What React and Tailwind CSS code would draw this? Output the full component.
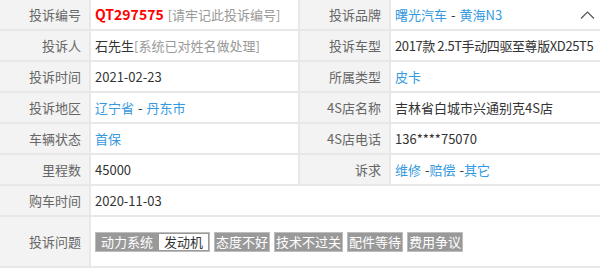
import React from "react";

const label = "flex items-center justify-end bg-[#f3f3f3] pr-[8px] text-[#666] whitespace-nowrap";
const value = "flex items-center bg-white pl-[4px] text-[#333] whitespace-nowrap overflow-hidden";
const link = "text-[#3399e0]";

function Chevron() {
  return (
    <svg width="15" height="10" viewBox="0 0 15 10" fill="none" className="ml-auto mr-[5px]">
      <path d="M1 8.5L7.5 2L14 8.5" stroke="#555" strokeWidth="1.2" />
    </svg>
  );
}

export default function App() {
  const tags = ["态度不好", "技术不过关", "配件等待", "费用争议"];

  return (
    <div className="w-[600px] h-[268px] bg-white font-['Noto_Sans_CJK_SC',sans-serif] text-[13px]">
      <div className="grid grid-cols-[89px_207px_89px_1fr] grid-rows-[repeat(7,29px)_49px] gap-[2px] bg-[#e8e8e8] pb-[2px]">
        <div className={label}>投诉编号</div>
        <div className={value}>
          <span className="text-[14px] font-bold text-[#ff0000]">QT297575</span>
          <span className="ml-[4px] text-[#999]">[请牢记此投诉编号]</span>
        </div>
        <div className={label}>投诉品牌</div>
        <div className={value}>
          <span className={link}>曙光汽车</span>
          <span className="mx-[4px]">-</span>
          <span className={link}>黄海N3</span>
          <Chevron />
        </div>

        <div className={label}>投诉人</div>
        <div className={value}>
          石先生<span className="text-[#999]">[系统已对姓名做处理]</span>
        </div>
        <div className={label}>投诉车型</div>
        <div className={`${value} tracking-[-0.4px]`}>2017款 2.5T手动四驱至尊版XD25T5</div>

        <div className={label}>投诉时间</div>
        <div className={value}>2021-02-23</div>
        <div className={label}>所属类型</div>
        <div className={value}>
          <span className={link}>皮卡</span>
        </div>

        <div className={label}>投诉地区</div>
        <div className={value}>
          <span className={link}>辽宁省</span>
          <span className="mx-[4px]">-</span>
          <span className={link}>丹东市</span>
        </div>
        <div className={label}>4S店名称</div>
        <div className={value}>吉林省白城市兴通别克4S店</div>

        <div className={label}>车辆状态</div>
        <div className={value}>
          <span className={link}>首保</span>
        </div>
        <div className={label}>4S店电话</div>
        <div className={value}>136****75070</div>

        <div className={label}>里程数</div>
        <div className={value}>45000</div>
        <div className={label}>诉求</div>
        <div className={value}>
          <span className={link}>维修</span>
          <span className="ml-[4px]">-</span>
          <span className={link}>赔偿</span>
          <span className="ml-[4px]">-</span>
          <span className={link}>其它</span>
        </div>

        <div className={label}>购车时间</div>
        <div className={`${value} col-span-3`}>2020-11-03</div>

        <div className={label}>投诉问题</div>
        <div className={`${value} col-span-3 gap-[4px] pl-[3px]`}>
          <div className="flex h-[20px] border border-[#bdbdbd]">
            <span className="flex items-center bg-[#999] px-[5px] text-white">动力系统</span>
            <span className="flex items-center border border-[#999] bg-white px-[5px] text-[#333]">发动机</span>
          </div>
          {tags.map((t) => (
            <span
              key={t}
              className="flex h-[20px] items-center border border-[#bdbdbd] bg-[#999] px-[1px] text-white"
            >
              {t}
            </span>
          ))}
        </div>
      </div>
    </div>
  );
}
